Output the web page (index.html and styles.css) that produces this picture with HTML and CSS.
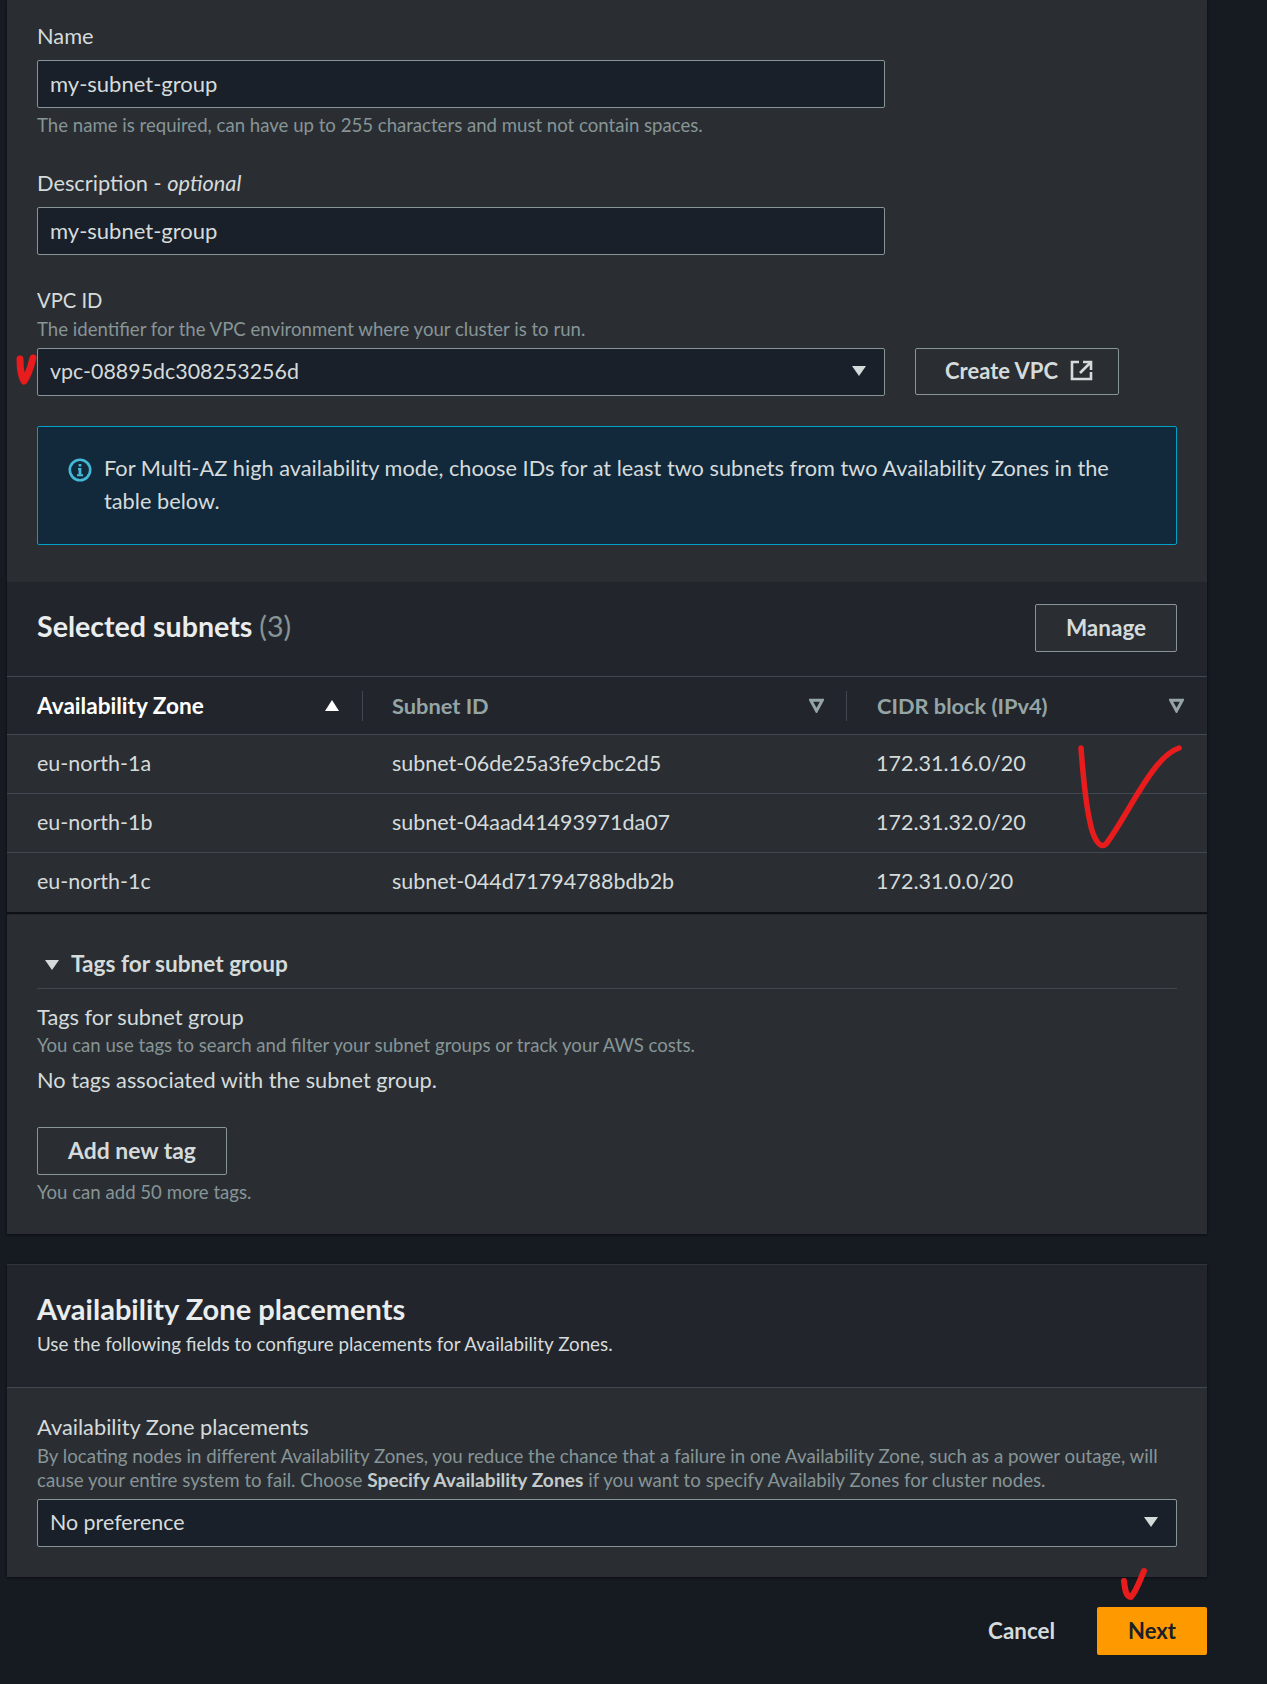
FILE: index.html
```html
<!DOCTYPE html>
<html lang="en">
<head>
    <meta charset="UTF-8">
    <meta name="viewport" content="width=device-width, initial-scale=1.0">
    <title>Create subnet group</title>
    <link rel="stylesheet" href="styles.css">
</head>
<body>
    <main class="page">
        <section class="panel">
            <div class="form-top">
                <div class="field field-name">
                    <label class="label">Name</label>
                    <div class="input input-text">my-subnet-group</div>
                    <p class="help help-below">The name is required, can have up to 255 characters and must not contain spaces.</p>
                </div>
                <div class="field field-desc">
                    <label class="label">Description - <em>optional</em></label>
                    <div class="input input-text">my-subnet-group</div>
                </div>
                <div class="field field-vpc">
                    <label class="label label-vpc">VPC ID</label>
                    <p class="help help-above">The identifier for the VPC environment where your cluster is to run.</p>
                    <div class="vpc-row">
                        <div class="input select">
                            <span>vpc-08895dc308253256d</span>
                            <svg class="caret" viewBox="0 0 16 12"><path d="M1 1h14L8 11z"/></svg>
                        </div>
                        <button class="btn btn-vpc">
                            Create VPC
                            <svg class="ext-icon" viewBox="0 0 23 21"><path d="M9 2H2v17h19v-7M13 2h8v8M21 2L10 13"/></svg>
                        </button>
                    </div>
                </div>
                <div class="alert">
                    <svg class="info-icon" viewBox="0 0 24 24">
                        <circle cx="12" cy="12" r="10.2"/>
                        <path class="info-i" d="M10 10h3.4v6.2H15v2H9v-2h1.6v-4.2H10zM10.6 6h2.8v2.6h-2.8z"/>
                    </svg>
                    <p>For Multi-AZ high availability mode, choose IDs for at least two subnets from two Availability Zones in the table below.</p>
                </div>
            </div>

            <div class="subnets">
                <div class="subnets-head">
                    <h2 class="subnets-title">Selected subnets <span class="count">(3)</span></h2>
                    <button class="btn btn-manage">Manage</button>
                </div>
                <table class="subnet-table">
                    <thead>
                        <tr>
                            <th class="col-az sorted"><div class="th-in">Availability Zone <svg class="sort-up" viewBox="0 0 16 13"><path d="M8 1l7 11H1z"/></svg></div></th>
                            <th class="col-id"><div class="th-in">Subnet ID <svg class="sort" viewBox="0 0 14 14"><path d="M1.5 2h11L7 12z"/></svg></div></th>
                            <th class="col-cidr"><div class="th-in">CIDR block (IPv4) <svg class="sort" viewBox="0 0 14 14"><path d="M1.5 2h11L7 12z"/></svg></div></th>
                        </tr>
                    </thead>
                    <tbody>
                        <tr><td>eu-north-1a</td><td>subnet-06de25a3fe9cbc2d5</td><td>172.31.16.0/20</td></tr>
                        <tr><td>eu-north-1b</td><td>subnet-04aad41493971da07</td><td>172.31.32.0/20</td></tr>
                        <tr><td>eu-north-1c</td><td>subnet-044d71794788bdb2b</td><td>172.31.0.0/20</td></tr>
                    </tbody>
                </table>
            </div>

            <div class="tags">
                <div class="tags-toggle">
                    <svg class="caret" viewBox="0 0 16 12"><path d="M1 1h14L8 11z"/></svg>
                    <span>Tags for subnet group</span>
                </div>
                <div class="label tags-label">Tags for subnet group</div>
                <p class="help tags-help">You can use tags to search and filter your subnet groups or track your AWS costs.</p>
                <p class="no-tags">No tags associated with the subnet group.</p>
                <button class="btn btn-tag">Add new tag</button>
                <p class="help tags-left">You can add 50 more tags.</p>
            </div>
        </section>

        <section class="panel panel-az">
            <header class="az-head">
                <h2 class="az-title">Availability Zone placements</h2>
                <p class="az-sub">Use the following fields to configure placements for Availability Zones.</p>
            </header>
            <div class="az-body">
                <div class="label">Availability Zone placements</div>
                <p class="help az-help">By locating nodes in different Availability Zones, you reduce the chance that a failure in one Availability Zone, such as a power outage, will</p>
                <p class="help">cause your entire system to fail. Choose <b>Specify Availability Zones</b> if you want to specify Availabily Zones for cluster nodes.</p>
                <div class="input select">
                    <span>No preference</span>
                    <svg class="caret" viewBox="0 0 16 12"><path d="M1 1h14L8 11z"/></svg>
                </div>
            </div>
        </section>

        <footer class="actions">
            <button class="btn-cancel">Cancel</button>
            <button class="btn-next">Next</button>
        </footer>
    </main>

    <!-- red pen marks drawn on top of the screenshot -->
    <svg class="marks" viewBox="0 0 1267 1684">
        <path class="mark-thin" d="M1081 748C1083 775 1085 800 1090 822C1093 838 1100 850 1106 844C1120 826 1135 795 1152 772C1162 758 1170 751 1179 748"/>
        <path class="mark-fat" d="M20 359C20 368 21 376 24 381C28 376 31 366 33 358"/>
        <path class="mark-mid" d="M1124 1581C1125 1590 1126 1597 1131 1597C1136 1592 1140 1580 1144 1571"/>
    </svg>
</body>
</html>
```

FILE: styles.css
```css
:root {
    --page-bg: #161a21;
    --panel-bg: #2a2e33;
    --table-bg: #22262c;
    --input-bg: #1a2029;
    --line: #414750;
    --field-border: #879596;
    --text: #d5dbdb;
    --muted: #879596;
}

* {
    box-sizing: border-box;
}

body {
    margin: 0;
    position: relative;
    background-color: var(--page-bg);
    color: var(--text);
    font-family: "Lato", "Liberation Sans", sans-serif;
    font-size: 20px;
}

p, h2 {
    margin: 0;
}

.page {
    width: 1207px;
    height: 1684px;
    margin-left: 7px;
    display: flex;
    flex-direction: column;
}

.panel {
    width: 1200px;
    background-color: var(--panel-bg);
    box-shadow: 0 1px 2px #0c0e12;
}

.form-top {
    height: 582px;
    padding: 24px 30px 0;
}

.label {
    display: block;
    height: 26px;
    line-height: 24px;
    font-size: 21.8px;
}

.label-vpc {
    font-size: 20.2px;
}

.help {
    color: var(--muted);
    font-size: 18.6px;
    line-height: 24px;
}

.help-below {
    margin-top: 5px;
}

.help-above {
    margin-top: 3px;
}

.input {
    width: 848px;
    height: 48px;
    margin-top: 10px;
    padding: 0 17px 2px 12px;
    display: flex;
    align-items: center;
    justify-content: space-between;
    background-color: var(--input-bg);
    border: 1px solid var(--field-border);
    border-radius: 2px;
    font-size: 21.4px;
}

.input-text {
    font-size: 22px;
}

.field-desc {
    margin-top: 34px;
}

.field-desc em {
    font-style: italic;
}

.field-vpc {
    margin-top: 33px;
}

.vpc-row {
    margin-top: 7px;
    display: flex;
    gap: 30px;
}

.vpc-row .input {
    margin-top: 0;
}

.caret {
    width: 16px;
    height: 12px;
    fill: #d5dbdb;
}

.btn {
    height: 47px;
    padding: 0 0 2px;
    background-color: var(--panel-bg);
    border: 1px solid var(--field-border);
    border-radius: 2px;
    color: var(--text);
    font-family: inherit;
    font-size: 22px;
    font-weight: 700;
}

.btn-vpc {
    width: 204px;
    padding-left: 4px;
    display: flex;
    align-items: center;
    justify-content: center;
    gap: 12px;
}

.ext-icon {
    width: 23px;
    height: 21px;
    fill: none;
    stroke: #d5dbdb;
    stroke-width: 2.6;
}

.alert {
    height: 119px;
    margin-top: 30px;
    padding: 25px 30px 0;
    display: flex;
    gap: 12px;
    background-color: #12293b;
    border: 1px solid #00a1c9;
    border-radius: 2px;
}

.alert p {
    width: 1040px;
    font-size: 21.75px;
    line-height: 33px;
}

.info-icon {
    flex: none;
    width: 24px;
    height: 24px;
    margin-top: 6px;
    fill: none;
    stroke: #44b9d6;
    stroke-width: 2.6;
}

.info-i {
    fill: #44b9d6;
    stroke: none;
}

.subnets {
    background-color: var(--table-bg);
    box-shadow: 0 1px 1px #0c0e12;
}

.subnets-head {
    height: 94px;
    padding: 22px 30px 0;
    display: flex;
    justify-content: space-between;
    align-items: flex-start;
}

.subnets-title {
    margin-top: 4px;
    font-size: 28.6px;
    line-height: 36px;
    font-weight: 700;
    color: #eaeded;
}

.count {
    color: var(--muted);
    font-weight: 400;
}

.btn-manage {
    width: 142px;
    height: 48px;
    font-size: 22.5px;
    background-color: #2a2e33;
}

.subnet-table {
    width: 100%;
    table-layout: fixed;
    border-collapse: collapse;
}

.subnet-table th {
    height: 58px;
    padding: 0;
    border-top: 1px solid var(--line);
    border-bottom: 1px solid var(--line);
    text-align: left;
    font-size: 21.8px;
    font-weight: 700;
    color: #95a5a6;
}

.col-az {
    width: 355px;
}

.col-id {
    width: 484px;
}

.th-in {
    height: 30px;
    padding: 0 23px 0 30px;
    display: flex;
    align-items: center;
    justify-content: space-between;
    border-left: 1px solid var(--line);
    line-height: 26px;
}

.col-id .th-in {
    padding: 0 22px 0 29px;
}

.col-az .th-in {
    padding-right: 22px;
    border-left: none;
    color: #fff;
    font-size: 22.6px;
}

.sort {
    width: 15px;
    height: 15px;
    fill: none;
    stroke: #95a5a6;
    stroke-width: 2.8;
}

.sort-up {
    width: 16px;
    height: 13px;
    fill: #fff;
}

.subnet-table td {
    height: 59px;
    padding: 0 0 3px 30px;
    background-color: var(--panel-bg);
    border-bottom: 1px solid var(--line);
    font-size: 21.5px;
}

.subnet-table tr:last-child td {
    height: 60px;
    border-bottom: 1px solid #0f1216;
}

.tags {
    height: 321px;
    padding: 37px 30px 0;
}

.tags-toggle {
    height: 39px;
    padding-left: 7px;
    display: flex;
    align-items: flex-start;
    gap: 11px;
    border-bottom: 1px solid var(--line);
    font-size: 22.6px;
    font-weight: 700;
    line-height: 28px;
}

.tags-toggle .caret {
    margin-top: 9px;
}

.tags-label {
    margin-top: 16px;
}

.tags-help {
    margin-top: 2px;
}

.no-tags {
    margin-top: 8px;
    font-size: 21.75px;
    line-height: 30px;
}

.btn-tag {
    display: block;
    width: 190px;
    height: 48px;
    margin-top: 32px;
    font-size: 22.9px;
}

.tags-left {
    margin-top: 5px;
}

.panel-az {
    margin-top: 30px;
    height: 313px;
    background-color: var(--panel-bg);
}

.az-head {
    height: 124px;
    padding: 26px 30px 0;
    background-color: var(--table-bg);
    border-top: 1px solid #30353b;
    border-bottom: 1px solid var(--line);
}

.az-title {
    font-size: 29px;
    line-height: 36px;
    font-weight: 700;
    color: #eaeded;
}

.az-sub {
    margin-top: 5px;
    font-size: 18.8px;
    line-height: 24px;
}

.az-body {
    padding: 27px 30px 0;
}

.az-body .help {
    font-size: 18.7px;
}

.az-body b {
    font-size: 19.2px;
    font-weight: 700;
    color: #c3cbcb;
}

.az-help {
    margin-top: 3px;
}

.az-body .input {
    width: 100%;
    margin-top: 7px;
}

.actions {
    margin-top: 30px;
    width: 1200px;
    display: flex;
    justify-content: flex-end;
    align-items: center;
    gap: 42px;
}

.btn-cancel {
    padding: 0 0 2px;
    background: none;
    border: none;
    color: var(--text);
    font-family: inherit;
    font-size: 22.4px;
    font-weight: 700;
}

.btn-next {
    width: 110px;
    height: 48px;
    padding: 0 0 2px;
    background-color: #ff9900;
    border: none;
    border-radius: 2px;
    color: #1a2029;
    font-family: inherit;
    font-size: 22px;
    font-weight: 700;
}

.marks {
    position: absolute;
    top: 0;
    left: 0;
    width: 1267px;
    height: 1684px;
    pointer-events: none;
    fill: none;
    stroke: #e81c1c;
    stroke-linecap: round;
    stroke-linejoin: round;
}

.mark-thin {
    stroke-width: 5.5;
}

.mark-fat {
    stroke-width: 7;
}

.mark-mid {
    stroke-width: 6;
}
```
